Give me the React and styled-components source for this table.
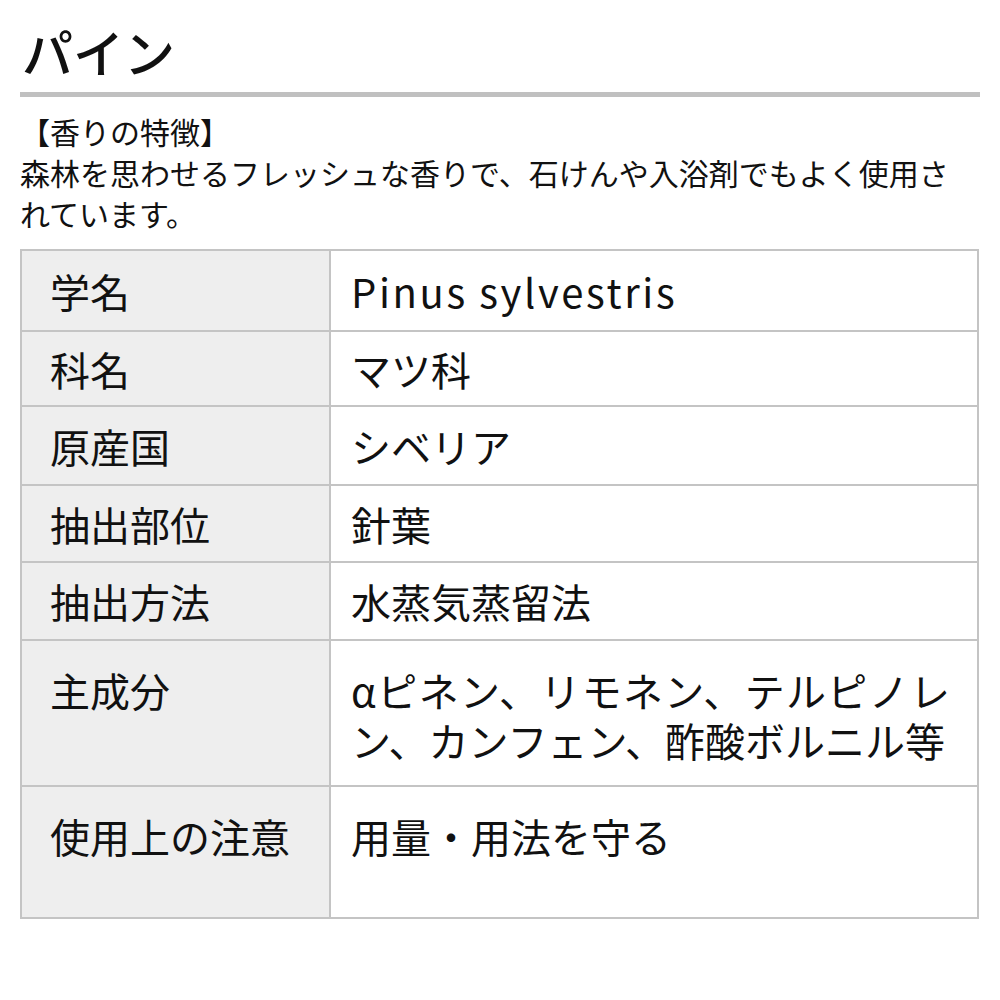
import React from "react";
import styled, { createGlobalStyle } from "styled-components";

const Global = createGlobalStyle`
  html, body { margin: 0; padding: 0; background: #ffffff; }
  body { font-family: "Noto Sans CJK JP", "Noto Sans", sans-serif; color: #111111; }
`;

const Page = styled.div`
  width: 1000px;
  height: 1000px;
  box-sizing: border-box;
  padding: 21px 20px 0 20px;
  display: flex;
  flex-direction: column;
`;

const Title = styled.h1`
  margin: 0;
  padding-left: 2px;
  font-size: 51px;
  line-height: 61px;
  font-weight: 500;
`;

const Rule = styled.div`
  margin-top: 10px;
  height: 5px;
  background: #c0c0c0;
`;

const Description = styled.div`
  margin-top: 14px;
  width: 945px;
  font-size: 30px;
  line-height: 41px;
`;

const Para = styled.p`
  margin: 0;
`;

const Table = styled.div`
  margin-top: 15px;
  width: 959px;
  box-sizing: border-box;
  border: 2px solid #c4c4c4;
  border-bottom: none;
  display: flex;
  flex-direction: column;
  font-size: 40px;
  line-height: 50px;
`;

const Row = styled.div`
  display: grid;
  grid-template-columns: 309px 1fr;
  height: ${(p) => p.$h}px;
  box-sizing: border-box;
  border-bottom: 2px solid #c4c4c4;
`;

const Label = styled.div`
  background: #eeeeee;
  border-right: 2px solid #c4c4c4;
  padding: ${(p) => (p.$top ? "24px 0 0 28px" : "0 0 0 28px")};
  display: flex;
  align-items: ${(p) => (p.$top ? "flex-start" : "center")};
  box-sizing: border-box;
`;

const Value = styled.div`
  padding: ${(p) => (p.$top ? "24px 27px 0 20px" : "0 27px 0 20px")};
  display: flex;
  align-items: ${(p) => (p.$top ? "flex-start" : "center")};
  box-sizing: border-box;
`;

const ValueText = styled.div`
  width: 100%;
  text-align: justify;
  text-justify: inter-character;
  letter-spacing: ${(p) => (p.$latin ? "2.6px" : "0")};
`;

const rows = [
  { label: "学名", value: "Pinus sylvestris", h: 81, latin: true },
  { label: "科名", value: "マツ科", h: 75 },
  { label: "原産国", value: "シベリア", h: 79 },
  { label: "抽出部位", value: "針葉", h: 77 },
  { label: "抽出方法", value: "水蒸気蒸留法", h: 78 },
  {
    label: "主成分",
    value: "αピネン、リモネン、テルピノレン、カンフェン、酢酸ボルニル等",
    h: 146,
    top: true,
  },
  { label: "使用上の注意", value: "用量・用法を守る", h: 132, top: true },
];

export default function App() {
  return (
    <>
      <Global />
      <Page>
        <Title>パイン</Title>
        <Rule />
        <Description>
          <Para>【香りの特徴】</Para>
          <Para>
            森林を思わせるフレッシュな香りで、石けんや入浴剤でもよく使用されています。
          </Para>
        </Description>
        <Table>
          {rows.map((r) => (
            <Row key={r.label} $h={r.h}>
              <Label $top={r.top}>{r.label}</Label>
              <Value $top={r.top}>
                <ValueText $latin={r.latin}>{r.value}</ValueText>
              </Value>
            </Row>
          ))}
        </Table>
      </Page>
    </>
  );
}
